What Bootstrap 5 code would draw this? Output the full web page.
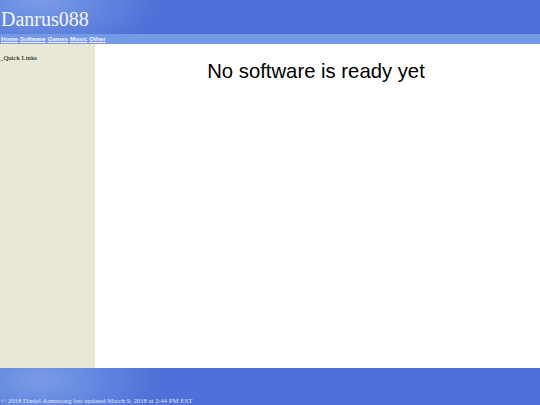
<!DOCTYPE html>
<html lang="en">
<head>
<meta charset="utf-8">
<title>Danrus088</title>
<link href="https://cdn.jsdelivr.net/npm/bootstrap@5.3.0/dist/css/bootstrap.min.css" rel="stylesheet">
<style>
html,body{height:100%;overflow:hidden}
body{font-family:"Liberation Serif",serif;color:#000;background:#fff}
.site-shell{height:405px}
.site-head{height:33.5px;background:radial-gradient(ellipse 120px 60px at 40px 0,#7a9ce6 0%,#4e70d8 100%);background-color:#4c6fd7;color:#f3f6fd;font-size:20px;line-height:38px;padding-left:1px}
.site-nav{height:10.5px;background:#7499e6;font-family:"Liberation Sans",sans-serif;font-size:6.1px;line-height:10.5px;font-weight:700;padding-left:1px;gap:2px}
.site-nav a{color:#f3f6fd;text-decoration:underline}
.side-col{width:95px;background:#e9e8d7;font-size:6.75px;padding-top:8px;line-height:11px}
.main-col{padding-right:3px}
.main-col h1{font-family:"Liberation Sans",sans-serif;font-size:20.3px;font-weight:400;line-height:23px;margin:16px 0 0;text-align:center;color:#000}
.site-foot{height:37px;background:radial-gradient(ellipse 120px 55px at 40px 12px,#7a9ce6 0%,#4e70d8 100%);background-color:#4c6fd7;color:#dfe6f8;font-size:6.75px;line-height:9px;padding-left:1px}
</style>
</head>
<body>
<div class="site-shell d-flex flex-column">
  <header class="site-head">Danrus088</header>
  <nav class="site-nav d-flex"><a href="#">Home</a><a href="#">Software</a><a href="#">Games</a><a href="#">Music</a><a href="#">Other</a></nav>
  <div class="d-flex flex-grow-1">
    <aside class="side-col"><span>_Quick Links</span></aside>
    <main class="main-col flex-grow-1"><h1>No software is ready yet</h1></main>
  </div>
  <footer class="site-foot d-flex align-items-end">© 2018 Daniel Armstrong last updated March 9, 2018 at 2:44 PM EST</footer>
</div>
<script src="https://cdn.jsdelivr.net/npm/bootstrap@5.3.0/dist/js/bootstrap.bundle.min.js"></script>
</body>
</html>
